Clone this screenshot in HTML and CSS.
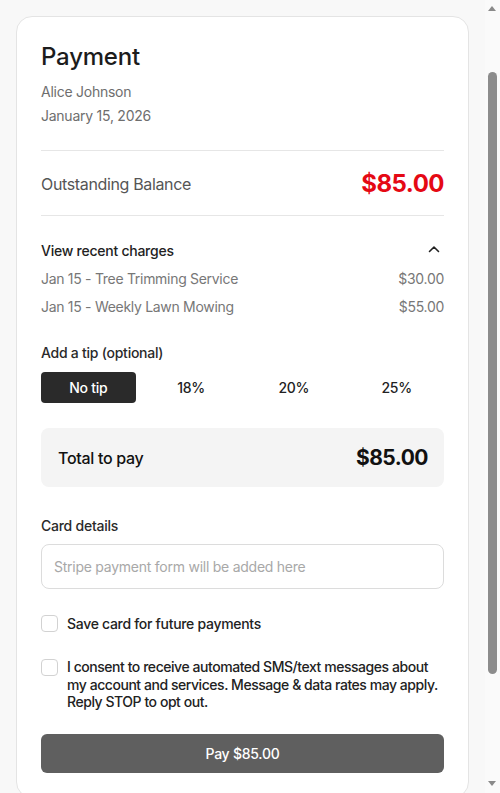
FILE: index.html
```html
<!DOCTYPE html>
<html lang="en">
<head>
<meta charset="utf-8">
<title>Payment</title>
<link rel="stylesheet" href="styles.css">
</head>
<body>
<main class="page">
  <section class="card">
    <header class="header">
      <h1 class="title">Payment</h1>
      <div class="sub">Alice Johnson</div>
      <div class="sub">January 15, 2026</div>
    </header>

    <div class="balance">
      <span class="balance-label">Outstanding Balance</span>
      <span class="balance-amount">$85.00</span>
    </div>

    <div class="charges">
      <div class="charges-toggle">
        <span>View recent charges</span>
        <svg class="chev" width="12" height="8" viewBox="0 0 12 8" aria-hidden="true"><path d="M1.5 6.5 L6 2 L10.5 6.5" fill="none" stroke="#222" stroke-width="1.6" stroke-linecap="round" stroke-linejoin="round"/></svg>
      </div>
      <div class="charge-row"><span>Jan 15 - Tree Trimming Service</span><span>$30.00</span></div>
      <div class="charge-row"><span>Jan 15 - Weekly Lawn Mowing</span><span>$55.00</span></div>
    </div>

    <div class="label tip-label">Add a tip (optional)</div>
    <div class="tips">
      <button class="tip active">No tip</button>
      <button class="tip">18%</button>
      <button class="tip">20%</button>
      <button class="tip">25%</button>
    </div>

    <div class="total">
      <span class="total-label">Total to pay</span>
      <span class="total-amount">$85.00</span>
    </div>

    <div class="label card-label">Card details</div>
    <div class="card-input">Stripe payment form will be added here</div>

    <label class="check check-save">
      <span class="box"></span>
      <span class="check-text">Save card for future payments</span>
    </label>

    <label class="check check-consent">
      <span class="box"></span>
      <span class="check-text">I consent to receive automated SMS/text messages about my account and services. Message &amp; data rates may apply. Reply STOP to opt out.</span>
    </label>

    <button class="pay">Pay $85.00</button>
  </section>
</main>
<div class="scrollbar" aria-hidden="true">
  <span class="sb-up"></span>
  <span class="sb-thumb"></span>
  <span class="sb-down"></span>
</div>
<script src="script.js"></script>
</body>
</html>
```

FILE: styles.css
```css
* { box-sizing: border-box; }
html, body { margin: 0; padding: 0; }
html { scrollbar-width: none; }
body {
  background: #f8f8f8;
  font-family: Inter, "Noto Sans", sans-serif;
  color: #222;
}
.page {
  padding: 88px 31px 135px 16px;
}
.card {
  background: #fff;
  border: 1px solid #e4e4e4;
  border-radius: 16px;
  padding: 24px 24px 24px 24px;
  display: flex;
  flex-direction: column;
}
.title {
  margin: 0;
  font-size: 24px;
  line-height: 32px;
  font-weight: 500;
  color: #1c1c1c;
  letter-spacing: -0.2px;
}
.sub {
  font-size: 14px;
  line-height: 24px;
  color: #6e6e6e;
  letter-spacing: -0.25px;
}
.header .sub:first-of-type { margin-top: 7px; }
.header { padding-bottom: 22px; border-bottom: 1px solid #e6e6e6; }
.balance {
  height: 65px;
  display: flex;
  align-items: center;
  justify-content: space-between;
  border-bottom: 1px solid #e6e6e6;
  padding-top: 1px;
}
.balance-label { font-size: 16px; color: #555; letter-spacing: -0.35px; }
.balance-amount { font-size: 24px; font-weight: 700; color: #e50914; letter-spacing: -0.5px; }
.charges { padding-top: 20px; }
.charges-toggle {
  height: 28px;
  display: flex;
  align-items: center;
  justify-content: space-between;
  font-size: 14px;
  font-weight: 500;
  color: #222;
  letter-spacing: -0.25px;
}
.chev { margin-right: 4px; margin-bottom: 2px; }
.charge-row {
  height: 28px;
  display: flex;
  align-items: center;
  justify-content: space-between;
  font-size: 14px;
  color: #777;
  letter-spacing: -0.3px;
}
.label {
  font-size: 14px;
  line-height: 20px;
  font-weight: 500;
  color: #2a2a2a;
  letter-spacing: -0.25px;
}
.tip-label { margin-top: 23px; }
.tips {
  margin-top: 9px;
  display: grid;
  grid-template-columns: repeat(4, 1fr);
  gap: 8px;
}
.tip {
  height: 31px;
  border: 0;
  border-radius: 4px;
  background: transparent;
  font-family: inherit;
  font-size: 14px;
  font-weight: 500;
  color: #222;
  padding: 0;
  letter-spacing: -0.25px;
}
.tip.active { background: #2a2a2a; color: #fff; }
.total {
  margin-top: 25px;
  height: 59px;
  background: #f4f4f4;
  border-radius: 8px;
  padding: 0 16px 0 17px;
  display: flex;
  align-items: center;
  justify-content: space-between;
}
.total-label { font-size: 16px; font-weight: 500; color: #111; letter-spacing: -0.3px; }
.total-amount { font-size: 21px; font-weight: 700; color: #111; letter-spacing: -0.5px; }
.card-label { margin-top: 29px; }
.card-input {
  margin-top: 8px;
  height: 45px;
  border: 1px solid #dcdcdc;
  border-radius: 8px;
  padding: 0 12px;
  display: flex;
  align-items: center;
  font-size: 14px;
  color: #a8a8a8;
  letter-spacing: -0.25px;
}
.check {
  display: flex;
  align-items: flex-start;
  gap: 9px;
  font-size: 14px;
  font-weight: 500;
  color: #222;
  letter-spacing: -0.3px;
}
.box {
  flex: 0 0 17px;
  width: 17px;
  height: 17px;
  border: 1px solid #d2d2d2;
  border-radius: 4px;
  background: #fff;
}
.check-save { margin-top: 25px; line-height: 20px; }
.check-save .box { margin-top: 1px; }
.check-consent { margin-top: 24px; line-height: 17.5px; letter-spacing: -0.45px; }
.check-consent .box { margin-top: 1px; }
.pay {
  margin-top: 23px;
  height: 39px;
  border: 0;
  border-radius: 6px;
  background: #5f5f5f;
  color: #fff;
  font-family: inherit;
  font-size: 14px;
  font-weight: 500;
  letter-spacing: -0.25px;
}
.scrollbar {
  position: fixed;
  top: 0;
  right: 0;
  width: 15px;
  height: 100vh;
  background: #fafafa;
}
.sb-up, .sb-down {
  position: absolute;
  left: 3px;
  width: 0;
  height: 0;
  border-left: 4.5px solid transparent;
  border-right: 4.5px solid transparent;
}
.sb-up { top: 6px; border-bottom: 5px solid #8a8a8a; }
.sb-down { bottom: 7px; border-top: 5px solid #8a8a8a; }
.sb-thumb {
  position: absolute;
  left: 3px;
  top: 72px;
  width: 9px;
  height: 602px;
  border-radius: 5px;
  background: #8c8c8c;
}
```

FILE: script.js
```js
window.scrollTo(0, 72);
```
